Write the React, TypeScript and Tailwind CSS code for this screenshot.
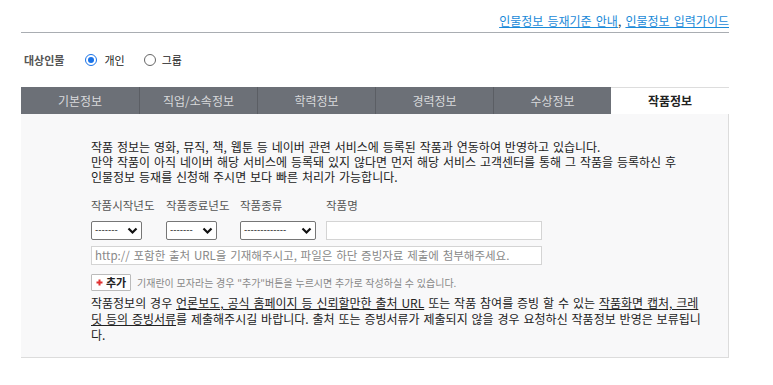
import React from 'react';

const tabs = ['기본정보', '직업/소속정보', '학력정보', '경력정보', '수상정보', '작품정보'];

const Select: React.FC<{ w: string; dash: string }> = ({ w, dash }) => (
    <div className={`${w} h-[19px] flex items-center justify-between border border-[#767676] rounded-[2px] bg-white px-[3px]`}>
        <span className="text-[9px] leading-none text-[#222] font-['DejaVu_Sans',sans-serif]">{dash}</span>
        <svg width="11" height="8" viewBox="0 0 11 8">
            <path d="M1.5 1.5 L5.5 5.5 L9.5 1.5" fill="none" stroke="#111" strokeWidth="2.2" />
        </svg>
    </div>
);

export default function App() {
    return (
        <div className="w-[773px] h-[385px] bg-white text-[#333] font-['Noto_Sans_CJK_KR','Noto_Sans',sans-serif] overflow-hidden">
            <div className="ml-[21px] w-[708px]">
                <div className="h-[33px] border-b border-[#a9adb2] flex items-end justify-end pb-[4px] text-[12px] leading-[14px] [word-spacing:1.5px]">
                    <a className="text-[#1a8ad8] underline">인물정보 등재기준 안내</a>
                    <span className="text-[#333]">,&nbsp;</span>
                    <a className="text-[#1a8ad8] underline">인물정보 입력가이드</a>
                </div>

                <div className="flex items-center h-[54px] text-[11px] pl-[3px]">
                    <span className="text-[#555] font-bold mr-[21px]">대상인물</span>
                    <label className="flex items-center mr-[19px]">
                        <span className="w-[12px] h-[12px] rounded-full border-[1.5px] border-[#1a73e8] flex items-center justify-center mr-[7px]">
                            <span className="w-[6px] h-[6px] rounded-full bg-[#1a73e8]" />
                        </span>
                        <span className="text-[#222]">개인</span>
                    </label>
                    <label className="flex items-center">
                        <span className="w-[12px] h-[12px] rounded-full border border-[#666] mr-[6px]" />
                        <span className="text-[#222]">그룹</span>
                    </label>
                </div>

                <div className="flex h-[27px]">
                    {tabs.map((t, i) => (
                        <div
                            key={t}
                            className={
                                i === 5
                                    ? 'w-[118px] flex items-center justify-center bg-white border-t border-[#ddd] text-[12px] font-bold text-[#222]'
                                    : `w-[118px] flex items-center justify-center bg-[#6c7077] text-[12px] text-[#d8d9db] ${i > 0 ? 'border-l border-[#5b5e64]' : ''}`
                            }
                        >
                            {t}
                        </div>
                    ))}
                </div>

                <div className="h-[244px] bg-[#f8f8f9] border-r border-b border-[#dcdcdc] pl-[70px] pt-[25px] text-[12px] [word-spacing:1.2px]">
                    <p className="leading-[15px] text-[#222]">
                        작품 정보는 영화, 뮤직, 책, 웹툰 등 네이버 관련 서비스에 등록된 작품과 연동하여 반영하고 있습니다.<br />
                        만약 작품이 아직 네이버 해당 서비스에 등록돼 있지 않다면 먼저 해당 서비스 고객센터를 통해 그 작품을 등록하신 후<br />
                        인물정보 등재를 신청해 주시면 보다 빠른 처리가 가능합니다.
                    </p>

                    <div className="flex mt-[14px] text-[11.5px] text-[#555] leading-[14px] [word-spacing:0px]">
                        <span className="w-[75px]">작품시작년도</span>
                        <span className="w-[74px]">작품종료년도</span>
                        <span className="w-[86px]">작품종류</span>
                        <span>작품명</span>
                    </div>
                    <div className="flex items-center mt-[9px] h-[19px]">
                        <Select w="w-[51px] mr-[24px]" dash="-------" />
                        <Select w="w-[51px] mr-[23px]" dash="-------" />
                        <Select w="w-[76px] mr-[10px]" dash="-------------" />
                        <div className="w-[216px] h-[19px] bg-white border border-[#d4d4d4]" />
                    </div>
                    <div className="mt-[6px] w-[451px] h-[19px] bg-white border border-[#d4d4d4] flex items-center px-[3px] text-[11.5px] text-[#888] whitespace-nowrap overflow-hidden">
                        http:// 포함한 출처 URL을 기재해주시고, 파일은 하단 증빙자료 제출에 첨부해주세요.
                    </div>

                    <div className="flex items-center mt-[9px]">
                        <div className="w-[40px] h-[17px] bg-white border border-[#bbb] rounded-[1px] flex items-center justify-center text-[11px] font-bold text-[#222]">
                            <svg width="7" height="7" viewBox="0 0 7 7" className="mr-[3px]">
                                <path d="M3.5 0.5 V6.5 M0.5 3.5 H6.5" stroke="#e03030" strokeWidth="2" />
                            </svg>
                            추가
                        </div>
                        <span className="ml-[6px] text-[10px] text-[#888] [word-spacing:0.5px]">기재란이 모자라는 경우 "추가"버튼을 누르시면 추가로 작성하실 수 있습니다.</span>
                    </div>

                    <p className="mt-[4px] w-[614px] leading-[16px] text-[#222]">
                        작품정보의 경우 <span className="underline">언론보도, 공식 홈페이지 등 신뢰할만한 출처 URL</span> 또는 작품 참여를 증빙 할 수 있는 <span className="underline">작품화면 캡처, 크레딧 등의 증빙서류</span>를 제출해주시길 바랍니다. 출처 또는 증빙서류가 제출되지 않을 경우 요청하신 작품정보 반영은 보류됩니다.
                    </p>
                </div>
            </div>
        </div>
    );
}
